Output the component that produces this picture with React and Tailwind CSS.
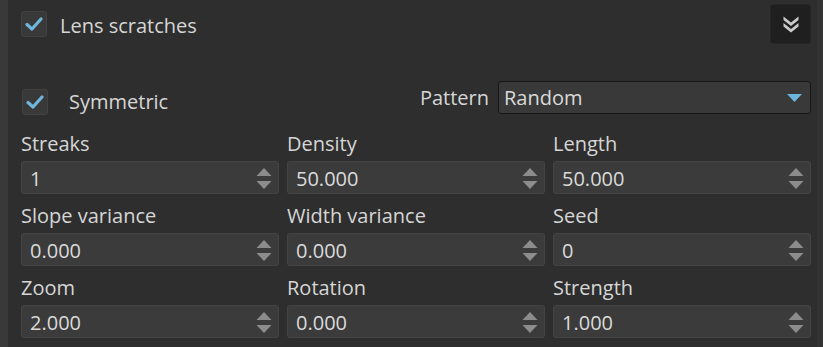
import React from 'react';

const fields = [
  { label: 'Streaks', value: '1' },
  { label: 'Density', value: '50.000' },
  { label: 'Length', value: '50.000' },
  { label: 'Slope variance', value: '0.000' },
  { label: 'Width variance', value: '0.000' },
  { label: 'Seed', value: '0' },
  { label: 'Zoom', value: '2.000' },
  { label: 'Rotation', value: '0.000' },
  { label: 'Strength', value: '1.000' },
];

const Check = () => (
  <div className="w-[26px] h-[26px] shrink-0 rounded-[3px] bg-[#393939] border border-[#424242] flex items-center justify-center">
    <svg width="20" height="16" viewBox="0 0 20 16">
      <path d="M3 8.5 L8 13 L17 3" fill="none" stroke="#6fb6dc" strokeWidth="3.2" strokeLinecap="round" strokeLinejoin="round" />
    </svg>
  </div>
);

const SpinBox = ({ value }) => (
  <div className="h-[33px] rounded-[3px] bg-[#3b3b3b] border border-[#444444] flex items-center pl-[8px] pr-[6px]">
    <span className="flex-1 text-[#dadada] pt-[3px]">{value}</span>
    <svg width="16" height="24" viewBox="0 0 16 24">
      <path d="M8 2 L15.5 10 L0.5 10 Z" fill="#8c8c8c" />
      <path d="M0.5 15 L15.5 15 L8 23 Z" fill="#8c8c8c" />
    </svg>
  </div>
);

export default function App() {
  return (
    <div
      className="w-[823px] h-[347px] bg-[#2e2e2e] flex overflow-hidden text-[20px] text-[#d6d6d6]"
      style={{ fontFamily: '"Open Sans", "Noto Sans", sans-serif' }}
    >
      <div className="w-[8px] bg-[#393939] shrink-0" />
      <div className="flex-1 pl-[13px] pr-[6px] flex flex-col">
        {/* header */}
        <div className="flex items-center h-[48px]">
          <Check />
          <span className="ml-[13px] mt-[4px] flex-1">Lens scratches</span>
          <div className="w-[41px] h-[40px] rounded-[3px] bg-[#1f1f1f] border border-[#262626] flex items-center justify-center">
            <svg width="18" height="18" viewBox="0 0 18 18">
              <path d="M1.5 1.5 L9 7.5 L16.5 1.5 L16.5 5 L9 11 L1.5 5 Z" fill="#c9c9c9" />
              <path d="M1.5 8 L9 14 L16.5 8 L16.5 11.5 L9 17.5 L1.5 11.5 Z" fill="#c9c9c9" />
            </svg>
          </div>
        </div>

        {/* symmetric / pattern */}
        <div className="flex items-center h-[33px] mt-[33px]">
          <div className="w-[26px] ml-[1px] mt-[8px]"><Check /></div>
          <span className="ml-[21px] mt-[8px] flex-1">Symmetric</span>
          <span className="mr-[9px]">Pattern</span>
          <div className="w-[313px] h-[33px] rounded-[3px] bg-[#393939] border border-[#161616] flex items-center pl-[5px] pr-[8px]">
            <span className="flex-1 text-[#dadada]">Random</span>
            <svg width="15" height="8" viewBox="0 0 15 8">
              <path d="M0 0 L15 0 L7.5 8 Z" fill="#6cb4dc" />
            </svg>
          </div>
        </div>

        {/* grid */}
        <div className="grid grid-cols-3 gap-x-[8px] mt-[8px]">
          {fields.map((f) => (
            <div key={f.label} className="flex flex-col">
              <div className="h-[39px] flex items-center pt-[4px]">{f.label}</div>
              <SpinBox value={f.value} />
            </div>
          ))}
        </div>
      </div>
      <div className="w-[6px] bg-[#333333] shrink-0" />
    </div>
  );
}
